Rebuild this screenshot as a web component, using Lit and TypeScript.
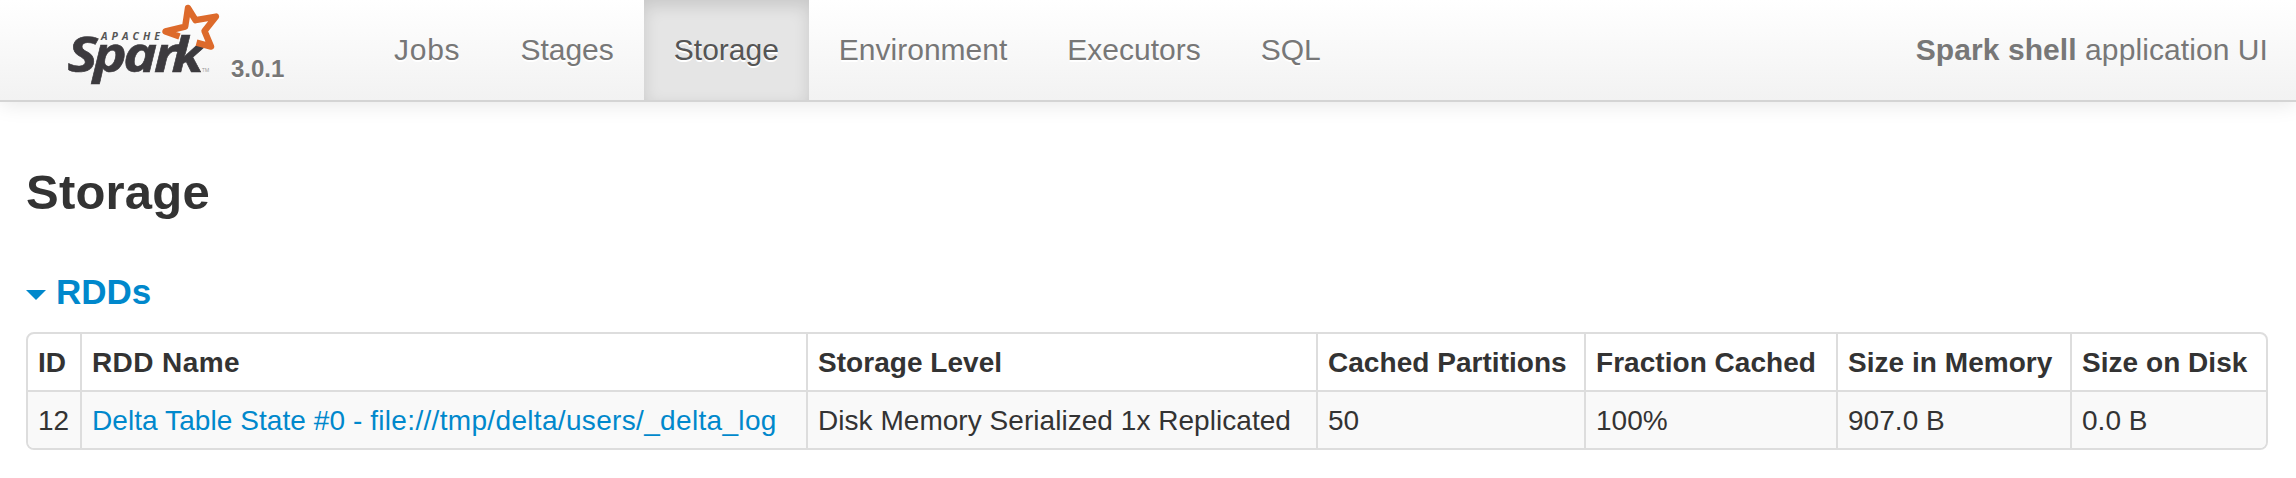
import { LitElement, html, css, svg } from "lit";
import { customElement } from "lit/decorators.js";
import { classMap } from "lit/directives/class-map.js";

const TABS = ["Jobs", "Stages", "Storage", "Environment", "Executors", "SQL"];
const COLUMNS = [
  "ID", "RDD Name", "Storage Level", "Cached Partitions",
  "Fraction Cached", "Size in Memory", "Size on Disk",
];
const ROWS = [
  ["12", "Delta Table State #0 - file:///tmp/delta/users/_delta_log",
    "Disk Memory Serialized 1x Replicated", "50", "100%", "907.0 B", "0.0 B"],
];

const star = svg`<path class="star" d="M79.5 36.5 L65.5 31.4 L85.2 26.6 L88 8 L95.6 20.2 L116 16.6 L104.5 31 L111 46.6 L96.5 42.6"/>`;

@customElement("spark-logo")
class SparkLogo extends LitElement {
  static styles = css`
    :host { display: block; width: 170px; height: 90px; text-shadow: none; }
    svg { display: block; overflow: visible; }
    text { fill: #3c3a3e; font-family: "Open Sans", sans-serif; font-style: italic; }
    .word { font-size: 49px; font-weight: 700; stroke: #3c3a3e; stroke-width: 0.6; }
    .apache { font-size: 10.4px; font-weight: 700; fill: #555; }
    .tm { font-size: 5px; fill: #999; font-style: normal; }
    .star { fill: none; stroke: #dd6a2b; stroke-width: 6.4; stroke-linejoin: round; }
  `;
  render() {
    return html`<svg width="170" height="90" viewBox="50 0 170 90" role="img" aria-label="Apache Spark">
      <g transform="translate(67 72) scale(1.16 1)">
        <text class="word" x="0.5 22.5 48.5 75 90" y="0">Spark</text>
      </g>
      <text class="apache" x="101" y="39.7" textLength="59" lengthAdjust="spacing">APACHE</text>
      <text class="tm" x="202" y="72">TM</text>
      <g transform="translate(100 0)">${star}</g>
    </svg>`;
  }
}

@customElement("app-root")
class AppRoot extends LitElement {
  static styles = css`
    :host {
      display: block; height: 478px; background: #fff; color: #333;
      font: 28px/40px "Liberation Sans", Arial, sans-serif;
    }
    .navbar {
      box-sizing: border-box; height: 102px; display: flex; padding: 0 28px 0 50px;
      border-bottom: 2px solid #d4d4d4; color: #777;
      background: linear-gradient(#fff, #f2f2f2);
      box-shadow: 0 2px 20px rgba(0, 0, 0, 0.1);
    }
    .brand { display: flex; width: 314px; text-shadow: 0 2px 0 #fff; }
    .version { margin: 49px 0 0 11px; font-size: 24px; font-weight: 700; }
    .tabs { display: flex; margin: 0; padding: 0; list-style: none; font-size: 30px; line-height: 99px; }
    .tab { padding: 0 30px; text-shadow: 0 2px 0 #fff; white-space: nowrap; }
    .tab:first-child { letter-spacing: 0.75px; }
    .active {
      color: #555; background: #e5e5e5;
      box-shadow: inset 0 6px 16px rgba(0, 0, 0, 0.125);
    }
    .app { margin: 0 0 0 auto; font-size: 30px; line-height: 99px; letter-spacing: 0.08px; }
    .page { padding: 0 28px 0 26px; }
    .title { margin: 0; padding-top: 50px; font-size: 49px; line-height: 80px; font-weight: 700; letter-spacing: 0.2px; }
    .section {
      display: flex; align-items: center; gap: 10px; margin: 40px 0 20px;
      color: #08c; font-size: 35px; line-height: 40px; font-weight: 700;
    }
    .caret { width: 20px; height: 10px; margin-top: 6px; background: #08c; clip-path: polygon(0 0, 100% 0, 50% 100%); }
    .table {
      display: grid; grid-template-columns: 52px 726px 510px 268px 252px 234px 196px;
      border: 2px solid #ddd; border-radius: 8px; overflow: hidden;
    }
    .cell {
      box-sizing: border-box; height: 56px; padding: 9px 0 0 10px;
      border-left: 2px solid #ddd; white-space: nowrap; letter-spacing: 0.04px;
    }
    .cell.first { border-left: 0; }
    .head { font-weight: 700; }
    .head.name { letter-spacing: 0.4px; }
    .data { height: 58px; border-top: 2px solid #ddd; background: #f9f9f9; }
    .link { color: #08c; text-decoration: none; letter-spacing: 0.07px; }
    .path { letter-spacing: 0.33px; }
  `;

  private nameLink(name: string) {
    const at = name.indexOf("file:");
    return html`<a class="link" href="#">${name.slice(0, at)}<span class="path">${name.slice(at)}</span></a>`;
  }

  render() {
    return html`
      <header class="navbar">
        <div class="brand"><spark-logo></spark-logo><span class="version">3.0.1</span></div>
        <ul class="tabs">
          ${TABS.map((t) => html`<li class=${classMap({ tab: true, active: t === "Storage" })}>${t}</li>`)}
        </ul>
        <p class="app"><strong>Spark shell</strong> application UI</p>
      </header>
      <main class="page">
        <h3 class="title">Storage</h3>
        <h4 class="section"><span class="caret"></span><span>RDDs</span></h4>
        <div class="table">
          ${COLUMNS.map((c, i) => html`<div class=${classMap({ cell: true, head: true, first: i === 0, name: i === 1 })}>${c}</div>`)}
          ${ROWS.map((r) => r.map((v, i) => html`<div class=${classMap({ cell: true, data: true, first: i === 0 })}>${i === 1 ? this.nameLink(v) : v}</div>`))}
        </div>
      </main>`;
  }
}
